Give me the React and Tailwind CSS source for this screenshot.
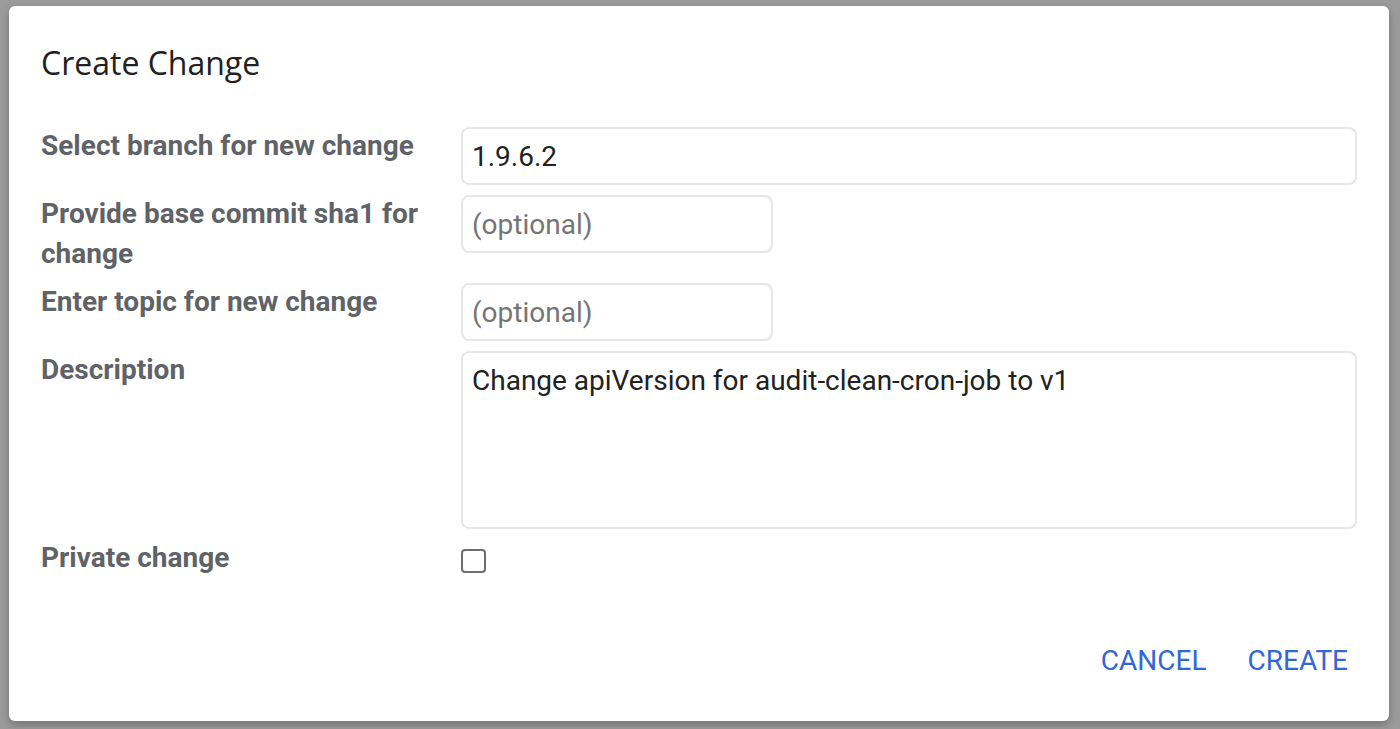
import { useState } from 'react'

const label = 'pt-[1px] -mb-[1px] text-[28px] leading-[40px] font-bold text-[#5f6368] pr-5'
const field =
  'mt-[2px] h-[58px] rounded-[8px] border-2 border-[#e6e6e6] bg-white px-[9px] text-[28px] text-[#212121] outline-none placeholder:text-[#757575]'

export default function App() {
  const [branch, setBranch] = useState('1.9.6.2')
  const [base, setBase] = useState('')
  const [topic, setTopic] = useState('')
  const [desc, setDesc] = useState('Change apiVersion for audit-clean-cron-job to v1')
  const [priv, setPriv] = useState(false)

  return (
    <div className="min-h-[729px] bg-[#9b9b9b] pt-[6px] pl-[9px]" style={{ fontFamily: 'Roboto, "Liberation Sans", sans-serif' }}>
      <div className="flex h-[715px] w-[1380px] flex-col rounded-[6px] bg-white px-8 shadow-[0_4px_8px_rgba(0,0,0,0.25)]">
        {/* Header */}
        <h1
          className="pt-[37px] text-[32px] leading-[40px] font-normal text-[#212121]"
          style={{ fontFamily: '"Open Sans", "Noto Sans", sans-serif' }}
        >
          Create Change
        </h1>

        {/* Form */}
        <div className="mt-[42px] grid grid-cols-[420px_1fr] items-start gap-y-[8px]">
          <div className={label}>Select branch for new change</div>
          <input className={field + ' w-full'} value={branch} onChange={(e) => setBranch(e.target.value)} />

          <div className={label}>Provide base commit sha1 for change</div>
          <input
            className={field + ' w-[312px]'}
            placeholder="(optional)"
            value={base}
            onChange={(e) => setBase(e.target.value)}
          />

          <div className={label}>Enter topic for new change</div>
          <input
            className={field + ' w-[312px]'}
            placeholder="(optional)"
            value={topic}
            onChange={(e) => setTopic(e.target.value)}
          />

          <div className={label}>Description</div>
          <textarea
            className="mt-[2px] h-[178px] w-full resize-none rounded-[8px] border-2 border-[#e6e6e6] px-[9px] py-[10px] text-[28px] leading-[36px] text-[#212121] outline-none"
            value={desc}
            onChange={(e) => setDesc(e.target.value)}
          />

          <div className={label}>Private change</div>
          <div className="pt-[12px]">
            <button
              onClick={() => setPriv(!priv)}
              className="block h-[24px] w-[25px] rounded-[4px] border-2 border-[#6e6e6e] bg-white"
            />
          </div>
        </div>

        {/* Actions */}
        <div className="mt-[64px] flex justify-end gap-[23px]">
          <button className="px-[9px] text-[28px] leading-[40px] text-[#3367d6]">CANCEL</button>
          <button className="px-[9px] text-[28px] leading-[40px] text-[#3367d6]">CREATE</button>
        </div>
      </div>
    </div>
  )
}
